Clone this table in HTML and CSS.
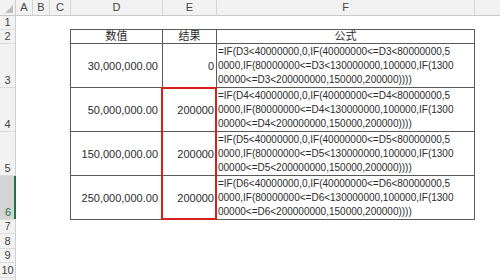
FILE: index.html
```html
<!DOCTYPE html>
<html lang="zh">
<head>
<meta charset="utf-8">
<title>Sheet</title>
<link rel="stylesheet" href="styles.css">
</head>
<body>
<div class="sheet">
  <div class="colhdr">
    <div class="ch corner"><svg width="16" height="16" viewBox="0 0 16 16"><polygon points="13,5 13,13 5,13" fill="#bdbdbd"/></svg></div>
    <div class="ch wa">A</div>
    <div class="ch wb">B</div>
    <div class="ch wc">C</div>
    <div class="ch wd">D</div>
    <div class="ch we">E</div>
    <div class="ch wf">F</div>
    <div class="ch wg"></div>
  </div>
  <div class="body">
    <div class="rowhdr">
      <div class="rh h14">1</div>
      <div class="rh h14">2</div>
      <div class="rh h44">3</div>
      <div class="rh h44">4</div>
      <div class="rh h44">5</div>
      <div class="rh h44 sel">6</div>
      <div class="rh h14">7</div>
      <div class="rh h15">8</div>
      <div class="rh h14">9</div>
      <div class="rh h15">10</div>
      <div class="rh h14"></div>
    </div>
    <div class="canvas">
      <div class="table">
        <div class="cell head">数值</div>
        <div class="cell head">结果</div>
        <div class="cell head">公式</div>

        <div class="cell num">30,000,000.00</div>
        <div class="cell res">0</div>
        <div class="cell fx">=IF(D3&lt;40000000,0,IF(40000000&lt;=D3&lt;80000000,5<br>0000,IF(80000000&lt;=D3&lt;130000000,100000,IF(1300<br>00000&lt;=D3&lt;200000000,150000,200000))))</div>

        <div class="cell num">50,000,000.00</div>
        <div class="cell res">200000</div>
        <div class="cell fx">=IF(D4&lt;40000000,0,IF(40000000&lt;=D4&lt;80000000,5<br>0000,IF(80000000&lt;=D4&lt;130000000,100000,IF(1300<br>00000&lt;=D4&lt;200000000,150000,200000))))</div>

        <div class="cell num">150,000,000.00</div>
        <div class="cell res">200000</div>
        <div class="cell fx">=IF(D5&lt;40000000,0,IF(40000000&lt;=D5&lt;80000000,5<br>0000,IF(80000000&lt;=D5&lt;130000000,100000,IF(1300<br>00000&lt;=D5&lt;200000000,150000,200000))))</div>

        <div class="cell num">250,000,000.00</div>
        <div class="cell res">200000</div>
        <div class="cell fx">=IF(D6&lt;40000000,0,IF(40000000&lt;=D6&lt;80000000,5<br>0000,IF(80000000&lt;=D6&lt;130000000,100000,IF(1300<br>00000&lt;=D6&lt;200000000,150000,200000))))</div>
      </div>
      <div class="redbox"></div>
    </div>
  </div>
</div>
</body>
</html>
```

FILE: styles.css
```css
* { box-sizing: border-box; }
html, body { margin: 0; padding: 0; background: #fff; }
body {
  width: 500px;
  height: 280px;
  overflow: hidden;
  font-family: "Liberation Sans", "Noto Sans CJK SC", sans-serif;
  font-size: 11px;
  color: #2b2b2b;
}
.sheet { display: flex; flex-direction: column; width: 500px; height: 280px; }

.colhdr { display: flex; height: 16px; background: #f2f2f2; border-bottom: 1px solid #c9c9c9; flex: none; }
.ch {
  height: 15px;
  border-right: 1px solid #d6d6d6;
  color: #444;
  text-align: center;
  line-height: 15px;
  flex: none;
}
.corner { width: 16px; border-right: 1px solid #cfcfcf; }
.corner svg { display: block; }
.wa { width: 17px; }
.wb { width: 17px; }
.wc { width: 21px; }
.wd { width: 92px; }
.we { width: 54px; }
.wf { width: 258px; }
.wg { flex: 1; border-right: none; }

.body { display: flex; flex: 1; min-height: 0; }
.rowhdr { display: flex; flex-direction: column; width: 16px; flex: none; background: #f2f2f2; border-right: 1px solid #cfcfcf; }
.rh {
  display: flex;
  align-items: flex-end;
  justify-content: center;
  border-bottom: 1px solid #dcdcdc;
  color: #444;
  line-height: 13px;
  flex: none;
}
.h14 { height: 14px; }
.h15 { height: 15px; }
.h44 { height: 44px; }
.rh.sel { background: #d4d4d4; color: #217346; box-shadow: inset -2px 0 0 #217346; margin-right: -1px; }

.canvas {
  display: grid;
  grid-template-columns: 17px 17px 21px 92px 54px 258px 1fr;
  grid-template-rows: 14px 14px 44px 44px 44px 44px 14px 15px 14px 15px 1fr;
  flex: 1;
}

.table {
  grid-column: 4 / 7;
  grid-row: 2 / 7;
  align-self: start;
  justify-self: start;
  width: 405px;
  height: 191px;
  margin: -1px 0 0 -1px;
  display: grid;
  grid-template-columns: 91px 53px 257px;
  grid-template-rows: 13px 43px 43px 43px 43px;
  gap: 1px;
  padding: 1px;
  background: #5a5a5a;
}
.cell { background: #fff; display: flex; align-items: center; white-space: nowrap; overflow: visible; }
.head { justify-content: center; line-height: 13px; }
.num { justify-content: flex-end; padding-right: 4px; }
.res { justify-content: flex-end; padding-right: 2px; }
.fx { padding-left: 1px; line-height: 14px; font-size: 10px; }

.redbox {
  grid-column: 5;
  grid-row: 4 / 7;
  align-self: start;
  justify-self: start;
  width: 56px;
  height: 133px;
  margin: -1px 0 0 -2px;
  border: 2px solid #d8201c;
  z-index: 1;
}
```
